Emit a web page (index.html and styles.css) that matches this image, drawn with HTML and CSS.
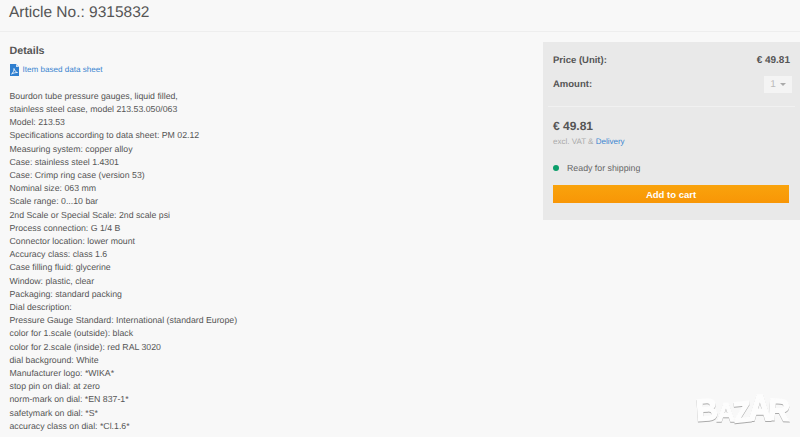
FILE: index.html
```html
<html lang="en">
<head>
    <title>Article 9315832</title>
    <link rel="stylesheet" href="styles.css">
</head>
<body>
    <h1 class="title">Article No.: 9315832</h1>
    <div class="content">
        <div class="details">
            <h2>Details</h2>
            <a class="sheet" href="#">
                <svg class="pdf" width="9" height="12" viewBox="0 0 9 12">
                    <path d="M0 0H6L9 3V12H0Z" fill="#2f7fd0"/>
                    <path d="M6 0V3H9Z" fill="#cfe2f5"/>
                    <path d="M1.5 10C3 9 4.2 6.5 4 4.5C4.6 6.5 5.6 8 7.5 8.5C5.5 8.5 3.5 9 1.5 10Z" fill="none" stroke="#fff" stroke-width=".8"/>
                </svg>
                Item based data sheet
            </a>
            <p class="desc">
                Bourdon tube pressure gauges, liquid filled,<br>
                stainless steel case, model 213.53.050/063<br>
                Model: 213.53<br>
                Specifications according to data sheet: PM 02.12<br>
                Measuring system: copper alloy<br>
                Case: stainless steel 1.4301<br>
                Case: Crimp ring case (version 53)<br>
                Nominal size: 063 mm<br>
                Scale range: 0...10 bar<br>
                2nd Scale or Special Scale: 2nd scale psi<br>
                Process connection: G 1/4 B<br>
                Connector location: lower mount<br>
                Accuracy class: class 1.6<br>
                Case filling fluid: glycerine<br>
                Window: plastic, clear<br>
                Packaging: standard packing<br>
                Dial description:<br>
                Pressure Gauge Standard: International (standard Europe)<br>
                color for 1.scale (outside): black<br>
                color for 2.scale (inside): red RAL 3020<br>
                dial background: White<br>
                Manufacturer logo: *WIKA*<br>
                stop pin on dial: at zero<br>
                norm-mark on dial: *EN 837-1*<br>
                safetymark on dial: *S*<br>
                accuracy class on dial: *Cl.1.6*
            </p>
        </div>
        <div class="box">
            <div class="box-top">
                <div class="row">
                    <b class="label">Price (Unit):</b>
                    <b class="unit-price">€ 49.81</b>
                </div>
                <div class="row amount">
                    <b class="label">Amount:</b>
                    <span class="select">1 <i class="arrow"></i></span>
                </div>
            </div>
            <div class="box-bottom">
                <div class="total">€ 49.81</div>
                <div class="vat">excl. VAT &amp; <a href="#">Delivery</a></div>
                <div class="stock"><i class="dot"></i>Ready for shipping</div>
                <button class="btn">Add to cart</button>
            </div>
        </div>
    </div>
    <div class="watermark"><span class="w1">B</span><span class="w2">A</span><span class="w3">Z</span><span class="w4">A</span><span class="w5">R</span></div>
</body>
</html>
```

FILE: styles.css
```css
html, body {
    height: 100%;
}
body {
    margin: 0;
    overflow: hidden;
    background-color: #f8f8f8;
    color: #555;
    font-family: "Liberation Sans", Arial, sans-serif;
    font-size: 10px;
    text-rendering: geometricPrecision;
}
a {
    color: #3a85d0;
    text-decoration: none;
}
.title {
    margin: 0;
    padding: 3px 9px 0;
    height: 28px;
    border-bottom: 1px solid #eee;
    font-size: 15.5px;
    line-height: 20px;
    font-weight: normal;
    color: #555;
}
.content {
    display: flex;
    justify-content: space-between;
    padding-top: 10px;
}
.details {
    padding-left: 9.5px;
}
.details h2 {
    margin: 2px 0 0;
    font-size: 10.7px;
    line-height: 14px;
    font-weight: bold;
    color: #555;
}
.sheet {
    display: flex;
    align-items: center;
    gap: 4px;
    margin-top: 4.5px;
    height: 14px;
    font-size: 8.1px;
}
.desc {
    margin: 13.2px 0 0;
    line-height: 13.2px;
    font-size: 8.75px;
}
.box {
    width: 257px;
    height: 178px;
    background-color: #e9e9e9;
}
.box-top {
    margin: 0 5px;
    padding: 0 5px;
    height: 64px;
    border-bottom: 1px solid #f1f1f1;
}
.row {
    display: flex;
    justify-content: space-between;
    align-items: center;
    height: 14px;
    padding-top: 11px;
    color: #555;
}
.amount {
    padding-top: 10px;
}
.label {
    font-size: 9.5px;
}
.select {
    width: 28px;
    height: 17px;
    line-height: 17px;
    text-align: center;
    background-color: #f4f4f4;
    color: #bbb;
    margin-right: -2px;
}
.arrow {
    display: inline-block;
    margin-left: 1px;
    vertical-align: 1px;
    border-left: 3px solid transparent;
    border-right: 3px solid transparent;
    border-top: 3px solid #aaa;
}
.box-bottom {
    padding: 0 10px;
}
.total {
    margin-top: 11px;
    font-size: 12px;
    line-height: 16px;
    font-weight: bold;
}
.vat {
    margin-top: 2px;
    font-size: 8px;
    line-height: 12px;
    color: #aaa;
}
.stock {
    display: flex;
    align-items: center;
    margin-top: 13px;
    font-size: 8.8px;
    line-height: 14px;
    color: #666;
}
.dot {
    width: 6px;
    height: 6px;
    margin-right: 8px;
    border-radius: 50%;
    background-color: #0b9e6a;
}
.btn {
    display: block;
    width: 236px;
    height: 18px;
    margin-top: 10px;
    padding: 0;
    border: 0;
    background: linear-gradient(#f9a30c, #f89606);
    color: #fff;
    font-family: inherit;
    font-size: 9.5px;
    font-weight: bold;
}
/* stock photo style logo lying over the page */
.watermark {
    position: absolute;
    right: 10px;
    bottom: 11px;
    display: flex;
    align-items: flex-end;
    color: #fdfdfd;
    font-size: 30px;
    line-height: 30px;
    font-weight: bold;
    -webkit-text-stroke: 1.6px #fdfdfd;
    filter: drop-shadow(0 1px 0.6px #aaa);
}
.watermark span {
    display: block;
}
.w1 {
    transform: rotate(-4deg);
}
.w2 {
    margin-left: -3px;
    transform: translateY(2px) scale(.85);
}
.w3 {
    margin-left: -3px;
    transform: translateY(2px) rotate(-6deg) scale(.95);
}
.w4 {
    margin-left: -3px;
    transform: translateY(-2px) scale(1.05, 1.2);
}
.w5 {
    margin-left: -2px;
    transform: rotate(4deg);
}
```
